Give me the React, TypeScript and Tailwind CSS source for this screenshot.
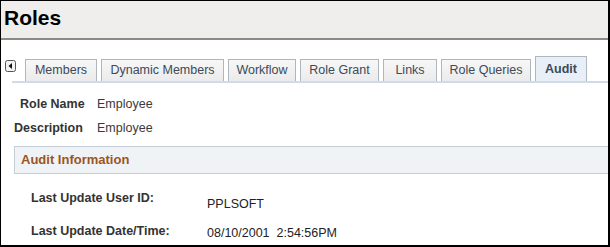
import React from 'react';

const tabs = [
  { label: 'Members', w: 'w-[72px]' },
  { label: 'Dynamic Members', w: 'w-[123px]' },
  { label: 'Workflow', w: 'w-[68px]' },
  { label: 'Role Grant', w: 'w-[79px]' },
  { label: 'Links', w: 'w-[54px]' },
  { label: 'Role Queries', w: 'w-[90px]' },
];

const App: React.FC = () => {
  return (
    <div className="w-[610px] h-[247px] bg-white font-['Liberation_Sans',Arial,sans-serif] border-l border-t border-r-2 border-b-2 border-black overflow-hidden">
      <div className="h-[39px] bg-[#efeeec] border-b-2 border-[#8a8a88] pl-[3px] pt-[5px]">
        <h1 className="text-[21px] leading-[24px] font-bold text-black">Roles</h1>
      </div>

      <div className="flex items-end h-[43px] pl-[4px]">
        <div className="self-start mt-[20px] mr-[9px]">
          <svg width="11" height="12" viewBox="0 0 11 12">
            <rect x="0.5" y="0.5" width="10" height="11" rx="2" fill="#f2f2f2" stroke="#555" />
            <path d="M7 3 L3.5 6 L7 9 Z" fill="#111" />
          </svg>
        </div>
        <div className="flex-1 flex items-end gap-[4px] border-b-2 border-[#cfdbe9] -ml-[13px] pl-[13px]">
          {tabs.map((t) => (
            <div
              key={t.label}
              className={`${t.w} h-[22px] border border-b-0 border-[#aeb6c0] bg-gradient-to-b from-[#f7f7f7] to-[#ebebeb] text-[12.5px] text-[#3c4a5a] flex items-center justify-center`}
            >
              {t.label}
            </div>
          ))}
          <div className="w-[52px] h-[25px] border border-b-0 border-[#aeb6c0] bg-[#e9eff7] text-[12.5px] font-bold text-[#3c4a5a] flex items-start justify-center pt-[3px]">
            Audit
          </div>
        </div>
      </div>

      <div className="text-[12.5px] leading-[15px]">
        <div className="flex items-center mt-[14px]">
          <span className="pl-[19px] w-[96px] font-bold text-[#333]">Role Name</span>
          <span className="text-[#3a3a3a]">Employee</span>
        </div>
        <div className="flex items-center mt-[9px]">
          <span className="pl-[13px] w-[96px] font-bold text-[#333]">Description</span>
          <span className="text-[#3a3a3a]">Employee</span>
        </div>
      </div>

      <div className="ml-[13px] mt-[10px] h-[28px] bg-[#eff3f5] border-y border-l border-[#c6cdd5] flex items-center pl-[6px]">
        <span className="text-[13px] font-bold text-[#9b5424]">Audit Information</span>
      </div>

      <div className="text-[12.5px] leading-[15px] pl-[30px]">
        <div className="flex mt-[17px]">
          <span className="w-[176px] font-bold text-[#333]">Last Update User ID:</span>
          <span className="mt-[6px] text-[#222]">PPLSOFT</span>
        </div>
        <div className="flex mt-[12px]">
          <span className="w-[176px] font-bold text-[#333]">Last Update Date/Time:</span>
          <span className="mt-[2px] text-[#222] whitespace-pre">08/10/2001  2:54:56PM</span>
        </div>
      </div>
    </div>
  );
};

export default App;
